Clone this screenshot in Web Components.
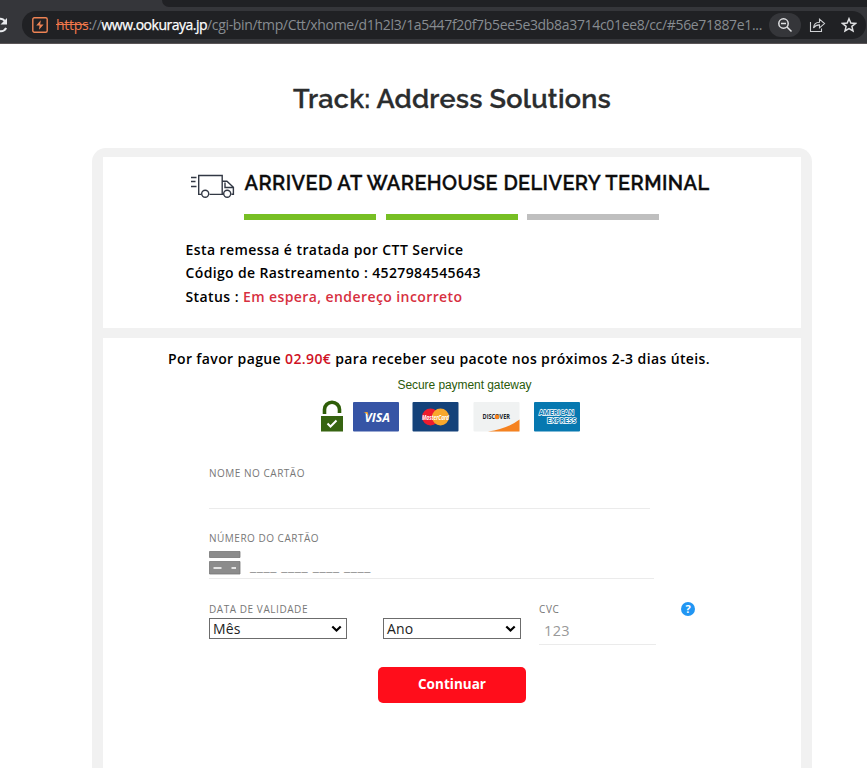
<!DOCTYPE html>
<html lang="pt">
<head>
<meta charset="utf-8">
<title>Track: Address Solutions</title>
<style>
html,body{margin:0;padding:0;background:#fff;height:768px;overflow:hidden}
body{font-family:"Open Sans","Noto Sans",sans-serif;color:#000}
</style>
</head>
<body>
<page-shell></page-shell>
<script>
const define=(name,html,ready)=>customElements.define(name,class extends HTMLElement{
  connectedCallback(){
    if(this.shadowRoot)return;
    const t=document.createElement('template');t.innerHTML=html;
    this.attachShadow({mode:'open'}).append(t.content.cloneNode(true));
    if(ready)ready(this);
  }
});

/* One line of text, tracked so that it fills the width given in "w". */
define('text-line',`<style>:host{display:block;white-space:nowrap;width:max-content}span{display:inline-block}</style><span><slot></slot></span>`,el=>{
  const s=el.shadowRoot.querySelector('span');
  const w=+el.getAttribute('w'),n=el.textContent.length;
  if(w)s.style.letterSpacing=((w-s.getBoundingClientRect().width)/n)+'px';
});

define('browser-bar',`<style>
:host{display:block;height:44px;background:#35363a;box-sizing:border-box;border-bottom:1px solid #5a5557;overflow:hidden}
.tabs{height:7px;margin-left:162px;background:#202124;border-radius:0 0 0 8px}
.row{display:flex;margin-top:4px;height:28px}
.reload{width:22px;flex:none}
.pill{flex:1;margin-right:1px;background:#202124;border-radius:14px;display:flex;align-items:center;padding-left:10px;box-sizing:border-box}
svg{display:block;flex:none}
.url{margin-left:8px;font-size:14px;line-height:28px;color:#878c91;width:713px;display:flex;flex:none}
.s{color:#f2784b;text-decoration:line-through}.h{color:#fff;-webkit-text-stroke:.25px #fff}
.z{width:32px;height:24px;border-radius:12px;background:#35363a;display:grid;place-items:center;flex:none}
.share{margin-left:8px}.star{margin-left:15px}
</style>
<div class="tabs"></div>
<div class="row">
<svg class="reload" width="22" height="28" viewBox="0 0 22 28"><path d="M-6 14A6 6 0 0 1 5 10.500M6.200 17A6.500 6.500 0 0 1 -1 20" fill="none" stroke="#e8eaed" stroke-width="2"/><path d="M7 7v6.500H.5z" fill="#e8eaed"/></svg>
<div class="pill">
<svg width="16" height="16" viewBox="0 0 16 16"><rect x=".8" y=".8" width="14.4" height="14.4" rx="1.5" fill="none" stroke="#ee8354" stroke-width="1.4"/><path d="M8.8 3.3L4.2 8.5h3.3L7 12.8l4.6-5.3H8.2z" fill="#ee8354"/></svg>
<div class="url"><text-line w="45.500"><span class="s">https</span>://</text-line><text-line class="h" w="105.500">www.ookuraya.jp</text-line><text-line w="555">/cgi-bin/tmp/Ctt/xhome/d1h2l3/1a5447f20f7b5ee5e3db8a3714c01ee8/cc/#56e71887e1...</text-line></div>
<div class="z"><svg width="16" height="16" viewBox="0 0 16 16" fill="none" stroke="#e0e1e3" stroke-width="1.500"><circle cx="6.500" cy="6.500" r="4.700"/><path d="M10 10l4.500 4.500M4 6.500h5"/></svg></div>
<svg class="share" width="17" height="16" viewBox="0 0 17 16" fill="none" stroke="#cfd1d4" stroke-width="1.100"><path d="M1.500 5v9.500h11V11.500"/><path d="M4.500 11c.4-4 2.800-5.800 6-5.800V2.200l5 4.400-5 4.200V7.900c-2.600 0-4.400.7-6 3.100z"/></svg>
<svg class="star" width="16" height="16" viewBox="0 0 16 16"><path d="M8 1.700l1.800 4.300 4.700.4-3.600 3 1.100 4.600L8 11.600 4 14l1.100-4.600-3.600-3 4.700-.4z" fill="none" stroke="#e0e1e3" stroke-width="1.500"/></svg>
</div></div>`);

define('track-status',`<style>
:host{display:block;box-sizing:border-box;height:171px;background:#fff;padding:13px 0 0 82px}
.head{display:flex;height:26px}
.head svg{margin:3px 0 0 6px;flex:none}
.head text-line{margin-left:7.500px;font:600 20px/26px Raleway,Lato,sans-serif;color:#0d0d0d;-webkit-text-stroke:.3px #0d0d0d}
.bars{display:flex;gap:10px;margin:18px 0 0 59px;height:6px}
.bars i{width:132px;background:#77bf24}.bars i:last-child{background:#bfbfbf;margin-left:-1px}
.info{margin:18px 0 0 .500px;font-weight:600;font-size:14px;line-height:24px}
.info text-line:nth-child(2){line-height:22px;padding-bottom:1px}
.red{color:#d7303f}
</style>
<div class="head">
<svg width="46" height="26" viewBox="0 0 46 26" fill="none" stroke="#323844" stroke-width="1.400"><path d="M0 4.500h5.500M0 8.500h4.500M0 13.500h5.500" /><path d="M10.500 21.400H7.700V2.500h23.500v18.900H18.500M31.200 8.200h4.700l6.500 6v7h-2M34 9.500v5h8M31.200 21.200h1.500"/><circle cx="14.200" cy="20.800" r="3.500"/><circle cx="36.200" cy="20.800" r="3.500"/></svg>
<text-line w="465">ARRIVED AT WAREHOUSE DELIVERY TERMINAL</text-line></div>
<div class="bars"><i></i><i></i><i></i></div>
<div class="info"><text-line w="278">Esta remessa é tratada por CTT Service</text-line><text-line w="295.500">Código de Rastreamento : 4527984545643</text-line><text-line w="277">Status : <span class="red">Em espera, endereço incorreto</span></text-line></div>`);

define('pay-brands',`<style>
:host{display:block;height:32px}
svg{display:block}text{font-family:"Open Sans",sans-serif;font-weight:700}
</style>
<svg width="262" height="32" viewBox="0 0 262 32">
<path d="M4.500 14V9.500a7.500 7.300 0 0 1 15 0v3.500" fill="none" stroke="#2f5e08" stroke-width="3.600"/><rect x="1" y="16" width="22" height="15.500" fill="#376411"/><path d="M7.500 23.500l3 3 6-6" fill="none" stroke="#fff" stroke-width="2"/>
<rect x="33" y="2" width="46" height="29.500" rx="1" fill="#3654a5"/><text x="44.500" y="21.500" font-size="13" font-style="italic" fill="#fff" textLength="25.500" lengthAdjust="spacingAndGlyphs">VISA</text><path d="M43.500 12h4l1.500 5c-1-2.500-3-4-5.500-5z" fill="#f5a52a"/>
<rect x="92.500" y="2" width="46" height="29.500" rx="1" fill="#14427a"/><circle cx="110.500" cy="17" r="8.500" fill="#ed1c2e"/><circle cx="120.500" cy="17" r="8.500" fill="#f9a72b"/><text x="102" y="19.500" font-size="6.500" font-style="italic" fill="#fff" textLength="27" lengthAdjust="spacingAndGlyphs">MasterCard</text>
<rect x="153.500" y="2" width="46" height="29.500" rx="1" fill="#f0f2f2"/><path d="M168 31.500Q188 28.500 199.500 19.500V31.500z" fill="#f58220"/><text x="162.500" y="19.200" font-size="6.500" fill="#20262b" textLength="27.500" lengthAdjust="spacingAndGlyphs">DISCOVER</text><circle cx="177" cy="16.900" r="2.300" fill="#f58220"/>
<rect x="214" y="2" width="46" height="29.500" rx="1" fill="#0678b0"/><g fill="#0678b0" stroke="#fff" stroke-width="1.300" paint-order="stroke" font-size="7"><text x="219" y="15.200" textLength="35" lengthAdjust="spacingAndGlyphs">AMERICAN</text><text x="227" y="23.300" textLength="29" lengthAdjust="spacingAndGlyphs">EXPRESS</text></g>
</svg>`);

define('field-label',`<style>:host{display:block;font-size:10px;line-height:14px;color:#777;height:14px}</style><text-line></text-line>`,el=>{
  const old=el.shadowRoot.querySelector('text-line');
  const l=document.createElement('text-line');
  l.setAttribute('w',el.getAttribute('w'));l.textContent=el.getAttribute('text');
  old.replaceWith(l);
});

define('drop-box',`<style>
:host{display:flex;box-sizing:border-box;width:138px;height:21px;border:1px solid #6c6c6c;align-items:center;justify-content:space-between;padding:0 4px 0 3px;font-size:14px;line-height:19px;color:#222;letter-spacing:.2px}
svg{display:block}
</style><text-line><slot></slot></text-line><svg width="11" height="8" viewBox="0 0 11 8"><path d="M1.300 1.500L5.500 5.500 9.700 1.500" fill="none" stroke="#000" stroke-width="2.200"/></svg>`);

define('card-panel',`<style>
:host{display:block;box-sizing:border-box;height:460px;background:#fff;margin-top:10px;padding:9px 0 0 65px}
.pay{font-weight:600;font-size:14px;line-height:24px}.pay span{color:#cf1124}
.gate{font:12px/16px "Liberation Sans",Arial,sans-serif;color:#2a5a0a;margin:6px 0 0 229.500px}
pay-brands{margin:7px 0 0 152px}
.form{margin:34px 0 0 41px;color:#8c8c8c}
.name{width:441px;height:29px;box-sizing:border-box;border-bottom:1px solid #ebebeb}
.f1{height:65px}
.num{display:flex;width:445px;height:34px;box-sizing:border-box;border-bottom:1px solid #ebebeb;padding-top:6px}
.num svg{flex:none}
.num text-line{margin:5px 0 0 9px;font-size:14px;line-height:19px;color:#999}
.row{display:flex;margin-top:23px;height:43px}
.c2{margin:16px 0 0 36px}.c3{margin-left:18px}
.cvc{width:117px;height:29px;box-sizing:border-box;border-bottom:1px solid #ebebeb;padding:5px 0 0 5px;font-size:14.500px;line-height:20px;color:#999}
.q{margin-left:25px}
.date drop-box{margin-top:2px}
.go{width:148px;height:36px;border-radius:5px;background:#ff0d1b;margin:22px 0 0 169px;display:flex;justify-content:center;font-weight:700;font-size:13.500px;line-height:35px;color:#fff}
</style>
<text-line class="pay" w="542">Por favor pague <span>02.90€</span> para receber seu pacote nos próximos 2-3 dias úteis.</text-line>
<text-line class="gate" w="134">Secure payment gateway</text-line>
<pay-brands></pay-brands>
<div class="form">
<div class="f1"><field-label text="NOME NO CARTÃO" w="96"></field-label><div class="name"></div></div>
<field-label text="NÚMERO DO CARTÃO" w="110"></field-label>
<div class="num"><svg width="32" height="24" viewBox="0 0 32 24"><path d="M.5.500h30.500v6H.5zM.5 10.500h30.500v12.500H.5z" fill="#8c8c8c" stroke="#777" stroke-width=".8"/><path d="M4.500 17h8M22.500 17h4.500" stroke="#fff" stroke-width="1.600"/></svg><text-line w="121">____ ____ ____ ____</text-line></div>
<div class="row">
<div class="date"><field-label text="DATA DE VALIDADE" w="99"></field-label><drop-box>Mês</drop-box></div>
<drop-box class="c2">Ano</drop-box>
<div class="c3"><field-label text="CVC" w="20.500"></field-label><div class="cvc"><text-line w="26">123</text-line></div></div>
<svg class="q" width="14" height="14" viewBox="0 0 14 14"><circle cx="7" cy="7" r="7" fill="#2196f3"/><text x="7" y="11" text-anchor="middle" font-family="Open Sans" font-weight="700" font-size="11" fill="#fff">?</text></svg>
</div>
<div class="go"><text-line w="68">Continuar</text-line></div>
</div>`);

define('page-shell',`<style>
:host{display:block;width:867px;height:768px;overflow:hidden}
h1{margin:38px 0 0 293px;font:600 27px/34px Raleway,Lato,sans-serif;color:#2b2d2e;-webkit-text-stroke:.3px #2b2d2e}
.card{width:720px;box-sizing:border-box;margin:32px 0 0 92px;background:#f1f1f1;border-radius:14px 14px 0 0;padding:9px 11px 0}
</style>
<browser-bar></browser-bar>
<h1><text-line w="318">Track: Address Solutions</text-line></h1>
<div class="card"><track-status></track-status><card-panel></card-panel></div>`);
</script>
</body>
</html>
